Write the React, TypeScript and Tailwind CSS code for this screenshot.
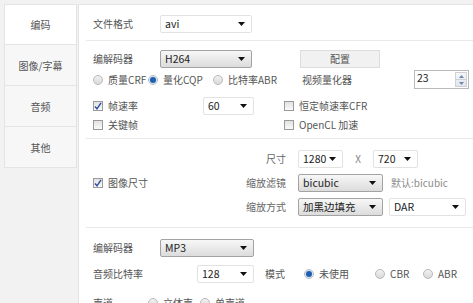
import React from "react";

const font = { fontFamily: '"Noto Sans CJK SC", "Open Sans", sans-serif' };

function Arrow() {
  return (
    <svg width="7" height="4" viewBox="0 0 7 4" className="shrink-0">
      <path d="M0 0 L7 0 L3.5 4 Z" fill="#111" />
    </svg>
  );
}

function Select({ value, w, gray }: { value: string; w: string; gray?: boolean }) {
  return (
    <div
      className={`${w} h-[18px] shrink-0 flex items-center justify-between pl-[4px] pr-[6px] rounded-[2px] text-[10.5px] text-[#222] leading-none ${
        gray
          ? "border border-[#a3a3a3] bg-gradient-to-b from-[#f7f7f7] to-[#dcdcdc]"
          : "border border-[#e2e2e2] bg-white"
      }`}
    >
      <span>{value}</span>
      <Arrow />
    </div>
  );
}

function Radio({ checked }: { checked?: boolean }) {
  return (
    <span className="w-[10px] h-[10px] shrink-0 rounded-full border border-[#b8b8b8] bg-gradient-to-b from-[#f2f2f2] to-[#d9d9d9] flex items-center justify-center">
      {checked ? (
        <span className="w-[6px] h-[6px] rounded-full bg-[#1f5fae] ring-1 ring-[#cfe0f5]" />
      ) : null}
    </span>
  );
}

function Check({ checked }: { checked?: boolean }) {
  return (
    <span className="w-[10px] h-[10px] shrink-0 border border-[#9a9a9a] bg-gradient-to-b from-[#e2e2e2] to-[#fafafa] flex items-center justify-center">
      {checked ? (
        <svg width="8" height="8" viewBox="0 0 8 8">
          <path d="M1 4.5 L3 6.8 L7 0.8" stroke="#2c4e9e" strokeWidth="1.4" fill="none" />
        </svg>
      ) : null}
    </span>
  );
}

function RadioItem({ label, checked, w }: { label: string; checked?: boolean; w?: string }) {
  return (
    <div className={`${w ?? ""} shrink-0 flex items-center gap-[5px] text-[#555] leading-none`}>
      <Radio checked={checked} />
      <span>{label}</span>
    </div>
  );
}

function CheckItem({ label, checked, w }: { label: string; checked?: boolean; w?: string }) {
  return (
    <div className={`${w ?? ""} shrink-0 flex items-center gap-[5px] text-[#555] leading-none`}>
      <Check checked={checked} />
      <span>{label}</span>
    </div>
  );
}

function Divider() {
  return <div className="ml-[7px] h-px bg-[#e9e9e9]" />;
}

const tabs = ["编码", "图像/字幕", "音频", "其他"];

export default function App() {
  return (
    <div
      className="w-[473px] h-[303px] overflow-hidden bg-[#f2f2f2] flex pt-[4px] pl-[4px] whitespace-nowrap text-[10px]"
      style={font}
    >
      <div className="w-[73px] shrink-0 flex flex-col">
        {tabs.map((t, i) => (
          <div
            key={t}
            className={`h-[41px] flex items-center justify-center text-[#555] border-l border-r border-b border-[#e4e4e4] ${
              i === 0 ? "bg-white border-t" : "bg-[#f7f7f7]"
            }`}
          >
            {t}
          </div>
        ))}
      </div>

      <div className="flex-1 ml-[1px] bg-white border-l border-t border-[#e4e4e4] flex flex-col text-[#555] leading-none">
        <div className="mt-[10px] h-[18px] pl-[14px] flex items-center">
          <span className="w-[67px] shrink-0">文件格式</span>
          <Select value="avi" w="w-[92px]" />
        </div>
        <div className="mt-[7px]">
          <Divider />
        </div>

        <div className="mt-[9px] h-[18px] pl-[14px] flex items-center">
          <span className="w-[67px] shrink-0">编解码器</span>
          <Select value="H264" w="w-[92px]" gray />
          <div className="ml-[48px] w-[80px] h-[18px] shrink-0 flex items-center justify-center bg-[#f1f1f1] border border-[#dddddd] text-[#555]">
            配置
          </div>
        </div>

        <div className="mt-[2px] h-[19px] pl-[14px] flex items-center">
          <RadioItem label="质量CRF" w="w-[55px]" />
          <RadioItem label="量化CQP" checked w="w-[65px]" />
          <RadioItem label="比特率ABR" w="w-[89px]" />
          <span className="w-[112px] shrink-0">视频量化器</span>
          <div className="w-[55px] h-[19px] shrink-0 border border-[#b9b9b9] bg-white flex items-stretch">
            <span className="flex-1 pl-[2px] pt-[2px] text-[10.5px] text-[#222]">23</span>
            <div className="w-[12px] my-[1px] mr-[1px] flex flex-col border border-[#d0d0d0] bg-gradient-to-b from-[#f4f6f9] to-[#e1e6ee]">
              <div className="flex-1 flex items-center justify-center border-b border-[#d0d0d0]">
                <svg width="5" height="3" viewBox="0 0 5 3">
                  <path d="M0 3 L5 3 L2.5 0 Z" fill="#6f87aa" />
                </svg>
              </div>
              <div className="flex-1 flex items-center justify-center">
                <svg width="5" height="3" viewBox="0 0 5 3">
                  <path d="M0 0 L5 0 L2.5 3 Z" fill="#6f87aa" />
                </svg>
              </div>
            </div>
          </div>
        </div>

        <div className="mt-[8px] h-[18px] pl-[14px] flex items-center">
          <CheckItem label="帧速率" checked w="w-[110px]" />
          <Select value="60" w="w-[51px]" />
          <div className="ml-[30px]">
            <CheckItem label="恒定帧速率CFR" />
          </div>
        </div>

        <div className="mt-[5px] h-[18px] pl-[14px] flex items-center">
          <CheckItem label="关键帧" w="w-[191px]" />
          <CheckItem label="OpenCL 加速" />
        </div>

        <div className="mt-[8px]">
          <Divider />
        </div>

        <div className="mt-[11px] pl-[14px] flex">
          <div className="w-[143px] shrink-0 flex items-center">
            <CheckItem label="图像尺寸" checked />
          </div>
          <div className="flex flex-col">
            <div className="h-[18px] flex items-center">
              <span className="w-[50px] shrink-0 text-right text-[#666]">尺寸</span>
              <div className="ml-[12px]">
                <Select value="1280" w="w-[45px]" />
              </div>
              <span className="w-[30px] shrink-0 text-center text-[#888]">X</span>
              <Select value="720" w="w-[45px]" />
            </div>
            <div className="mt-[6px] h-[18px] flex items-center">
              <span className="w-[50px] shrink-0 text-right text-[#666]">缩放滤镜</span>
              <div className="ml-[12px]">
                <Select value="bicubic" w="w-[85px]" gray />
              </div>
              <span className="ml-[8px] text-[#8a8a8a]">默认:bicubic</span>
            </div>
            <div className="mt-[6px] h-[18px] flex items-center">
              <span className="w-[50px] shrink-0 text-right text-[#666]">缩放方式</span>
              <div className="ml-[12px]">
                <Select value="加黑边填充" w="w-[85px]" gray />
              </div>
              <div className="ml-[6px]">
                <Select value="DAR" w="w-[77px]" />
              </div>
            </div>
          </div>
        </div>

        <div className="mt-[11px]">
          <Divider />
        </div>

        <div className="mt-[11px] h-[18px] pl-[14px] flex items-center">
          <span className="w-[67px] shrink-0">编解码器</span>
          <Select value="MP3" w="w-[94px]" gray />
        </div>

        <div className="mt-[8px] h-[18px] pl-[14px] flex items-center">
          <span className="w-[104px] shrink-0">音频比特率</span>
          <Select value="128" w="w-[57px]" />
          <span className="ml-[11px] w-[39px] shrink-0">模式</span>
          <RadioItem label="未使用" checked w="w-[71px]" />
          <RadioItem label="CBR" w="w-[48px]" />
          <RadioItem label="ABR" />
        </div>

        <div className="mt-[15px] h-[18px] pl-[14px] flex items-center">
          <span className="w-[55px] shrink-0">声道</span>
          <RadioItem label="立体声" w="w-[52px]" />
          <RadioItem label="单声道" />
        </div>
      </div>
    </div>
  );
}
